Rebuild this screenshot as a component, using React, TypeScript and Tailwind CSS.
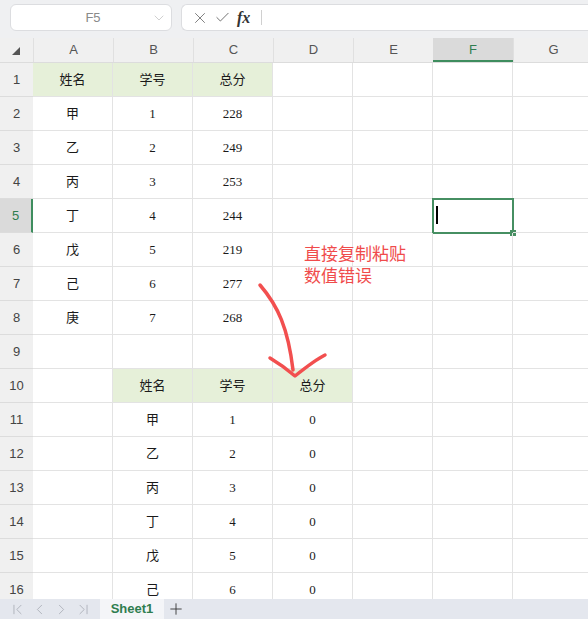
import { ChevronDown, X, Check, Plus, ChevronLeft, ChevronRight, ChevronFirst, ChevronLast } from "lucide-react";

const cols = ["A", "B", "C", "D", "E", "F", "G"];

// cell contents keyed by "row-col"
const cells: Record<string, string> = {};
const greenCells = new Set<string>();

const t1 = [
    ["甲", "1", "228"],
    ["乙", "2", "249"],
    ["丙", "3", "253"],
    ["丁", "4", "244"],
    ["戊", "5", "219"],
    ["己", "6", "277"],
    ["庚", "7", "268"],
];
["姓名", "学号", "总分"].forEach((h, i) => {
    cells[`1-${i}`] = h;
    greenCells.add(`1-${i}`);
    cells[`10-${i + 1}`] = h;
    greenCells.add(`10-${i + 1}`);
});
t1.forEach((r, ri) => {
    r.forEach((v, ci) => {
        cells[`${ri + 2}-${ci}`] = v;
        if (ri < 6) cells[`${ri + 11}-${ci + 1}`] = ci === 2 ? "0" : v;
    });
});

const rows = Array.from({ length: 16 }, (_, i) => i + 1);

const App = () => {
    return (
        <div className="w-[588px] h-[619px] overflow-hidden flex flex-col bg-white font-['Liberation_Sans','Noto_Sans_CJK_SC',sans-serif]">
            {/* top bar */}
            <div className="h-[38px] shrink-0 bg-[#eff0f2] flex items-start pt-[4px] pl-[10px] gap-[9px]">
                <div className="w-[162px] h-[27px] bg-white rounded-[6px] border border-[#dcdde0] flex items-center relative">
                    <span className="flex-1 text-center text-[13px] text-[#8a8a8a] pl-[4px]">F5</span>
                    <ChevronDown className="absolute right-[4px] top-[5px] size-[16px] text-[#c4c4c4]" strokeWidth={1.2} />
                </div>
                <div className="flex-1 h-[27px] bg-white rounded-l-[6px] border border-r-0 border-[#dcdde0] flex items-center pl-[9px]">
                    <X className="size-[18px] text-[#666]" strokeWidth={1.1} />
                    <Check className="size-[17px] text-[#666] ml-[5px]" strokeWidth={1.3} />
                    <span className="ml-[6px] text-[16px] italic font-bold text-[#333] font-['Liberation_Serif',serif] leading-none">fx</span>
                    <div className="ml-[11px] w-px h-[15px] bg-[#d0d0d0]" />
                </div>
            </div>

            {/* sheet */}
            <div className="flex-1 overflow-hidden relative">
                <div className="flex h-[25px] bg-[#f0f0f0] border-b border-[#dcdcdc]">
                    <div className="w-[33px] shrink-0 flex items-center justify-center">
                        <svg width="8" height="8" viewBox="0 0 8 8" className="mt-[2px] ml-[-1px]"><path d="M8 0 L8 8 L0 8 Z" fill="#555" /></svg>
                    </div>
                    {cols.map((c) => (
                        <div
                            key={c}
                            className={`w-[80px] shrink-0 flex items-center justify-center text-[13px] ${c === "F" ? "bg-[#dadada] text-[#2f7d4f] border-b-2 border-[#3e8d5e] pt-[2px]" : "text-[#555] border-l border-[#e0e0e0]"}`}
                        >
                            {c}
                        </div>
                    ))}
                </div>
                {rows.map((r) => (
                    <div key={r} className="flex h-[34px]">
                        <div
                            className={`w-[33px] shrink-0 flex items-center justify-center text-[13px] border-b ${r === 5 ? "bg-[#dadada] text-[#2f7d4f] border-r-2 border-r-[#3e8d5e] border-b-[#dcdcdc]" : "bg-[#f0f0f0] text-[#444] border-[#dcdcdc]"}`}
                        >
                            {r}
                        </div>
                        {cols.map((c, ci) => {
                            const k = `${r}-${ci}`;
                            return (
                                <div
                                    key={c}
                                    className={`w-[80px] shrink-0 border-r border-b border-[#e3e3e3] flex items-center justify-center text-[13px] text-[#1a1a1a] font-['Liberation_Serif','Noto_Sans_CJK_SC',serif] relative ${greenCells.has(k) ? "bg-[#e6f0d9]" : ""}`}
                                >
                                    {cells[k]}
                                    {r === 5 && c === "F" && (
                                        <div className="absolute left-[-1px] top-[-1px] w-[82px] h-[36px] border-2 border-[#468f62]">
                                            <div className="absolute left-[2px] top-[6px] w-[1.5px] h-[18px] bg-black" />
                                            <div className="absolute right-[-4px] bottom-[-4px] w-[6px] h-[6px] bg-[#468f62]" />
                                        </div>
                                    )}
                                </div>
                            );
                        })}
                    </div>
                ))}

                {/* annotation */}
                <div className="absolute left-[304px] top-[204px] text-[17px] text-[#f04b4b] font-['Noto_Sans_CJK_SC',sans-serif]">
                    <div className="h-[22px] leading-[22px]">直接复制粘贴</div>
                    <div className="h-[22px] leading-[22px]">数值错误</div>
                </div>
                <svg className="absolute left-0 top-0 pointer-events-none" width="588" height="561">
                    <path
                        d="M260 247 C 278 268, 288 290, 293 332"
                        fill="none"
                        stroke="#f24f4f"
                        strokeWidth="3.5"
                        strokeLinecap="round"
                    />
                    <path
                        d="M270 320 C 280 326, 288 332, 295 338 C 305 330, 315 322, 325 317"
                        fill="none"
                        stroke="#f24f4f"
                        strokeWidth="3.5"
                        strokeLinecap="round"
                        strokeLinejoin="round"
                    />
                </svg>
            </div>

            {/* tab bar */}
            <div className="h-[20px] shrink-0 bg-[#e4e7ee] flex items-center">
                <div className="w-[100px] flex items-center pl-[9px] gap-[5px] text-[#a3a7b0]">
                    <ChevronFirst className="size-[17px]" strokeWidth={1.1} />
                    <ChevronLeft className="size-[17px]" strokeWidth={1.1} />
                    <ChevronRight className="size-[17px]" strokeWidth={1.1} />
                    <ChevronLast className="size-[17px]" strokeWidth={1.1} />
                </div>
                <div className="w-[64px] h-full bg-[#f4f5f8] flex items-center justify-center text-[13px] font-semibold text-[#2f7d4f]">
                    Sheet1
                </div>
                <Plus className="size-[18px] text-[#333] ml-[3px]" strokeWidth={1.2} />
            </div>
        </div>
    );
};

export default App;
